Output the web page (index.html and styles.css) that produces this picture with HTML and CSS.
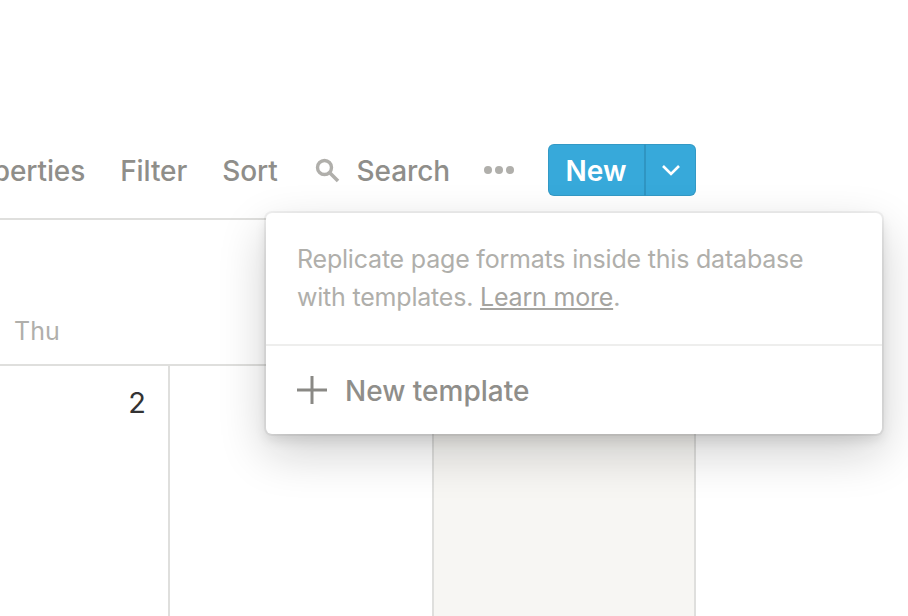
FILE: index.html
```html
<!DOCTYPE html>
<html lang="en">
<head>
<meta charset="utf-8">
<title>Templates</title>
<link rel="stylesheet" href="styles.css">
</head>
<body>
<div class="page">
  <div class="board">
    <div class="toolbar-wrap">
      <div class="toolbar">
        <span class="tool">Properties</span>
        <span class="tool">Filter</span>
        <span class="tool">Sort</span>
        <span class="tool search">
          <svg class="search-icon" width="26" height="26" viewBox="0 0 26 26"><circle cx="10.5" cy="10.5" r="7" fill="none" stroke="#b0afab" stroke-width="3.4"/><path d="M15.5 15.5L24 24" fill="none" stroke="#b0afab" stroke-width="3.6"/></svg>
          Search
        </span>
        <span class="dots"><i></i><i></i><i></i></span>
        <div class="new-btn">
          <span class="new-label">New</span>
          <span class="new-arrow">
            <svg width="20" height="12" viewBox="0 0 20 12"><path d="M2 2l8 8 8-8" fill="none" stroke="#fff" stroke-width="2.6"/></svg>
          </span>
        </div>
      </div>
    </div>
    <div class="head-row"><span class="day">Thu</span></div>
    <div class="cal-row">
      <div class="cell first"><span class="num">2</span></div>
      <div class="cell second"></div>
      <div class="cell shaded"></div>
    </div>
  </div>
  <div class="popup">
    <p class="hint">Replicate page formats inside this database with templates. <a class="learn">Learn more</a>.</p>
    <div class="add">
      <svg class="plus" width="30" height="28" viewBox="0 0 30 28"><path d="M0 14H30M15 0V28" fill="none" stroke="#8a8985" stroke-width="3"/></svg>
      <span class="add-label">New template</span>
    </div>
  </div>
</div>
</body>
</html>
```

FILE: styles.css
```css
html, body { margin: 0; padding: 0; background: #fff; }
.page {
  position: relative;
  width: 908px;
  height: 616px;
  overflow: hidden;
  font-family: Inter, "Liberation Sans", sans-serif;
  color: #37352f;
}
.board { width: 696px; }
.toolbar-wrap {
  padding-top: 144px;
  height: 74px;
  border-bottom: 2px solid #dfdfdd;
}
.toolbar {
  display: flex;
  justify-content: flex-end;
  align-items: center;
  height: 52px;
  gap: 35px;
}
.tool {
  font-size: 28px;
  font-weight: 500;
  letter-spacing: -.1px;
  padding-top: 2px;
  color: #8f8e8a;
  white-space: nowrap;
  flex: none;
}
.search { display: flex; align-items: center; gap: 17px; margin-left: 1px; }
.search-icon { flex: none; margin-top: -2px; }
.dots { display: flex; gap: 3px; flex: none; margin-left: -1px; }
.dots i { width: 8px; height: 8px; border-radius: 50%; background: #b0afab; display: block; }
.new-btn {
  display: flex;
  flex: none;
  width: 148px;
  height: 52px;
  margin-left: -1px;
  background: #37a9da;
  border-radius: 6px;
  box-shadow: inset 0 0 0 1px rgba(15,15,15,.1);
  color: #fff;
}
.new-label {
  width: 96px;
  padding-top: 2px;
  display: flex;
  align-items: center;
  justify-content: center;
  font-size: 28px;
  font-weight: 600;
  border-right: 2px solid #2f95c2;
}
.new-arrow { flex: 1; display: flex; align-items: center; justify-content: center; }
.head-row {
  height: 144px;
  border-bottom: 2px solid #dfdfdd;
  position: relative;
}
.day {
  position: absolute;
  left: 14px;
  top: 96px;
  font-size: 25px;
  color: #b0afab;
}
.cal-row {
  display: grid;
  grid-template-columns: 170px 264px 262px;
  height: 250px;
}
.cell { border-right: 2px solid #dfdfdd; }
.first { text-align: right; padding: 19px 22px 0 0; }
.num { font-size: 29px; color: #333; }
.shaded { background: #f7f6f3; }
.popup {
  position: absolute;
  left: 266px;
  top: 213px;
  width: 616px;
  height: 221px;
  background: #fff;
  border-radius: 6px;
  box-shadow: 0 0 0 2px rgba(15,15,15,.05), 0 6px 12px rgba(15,15,15,.1), 0 18px 48px rgba(15,15,15,.2);
}
.hint {
  margin: 0;
  height: 133px;
  box-sizing: border-box;
  padding: 27px 60px 0 31px;
  font-size: 25px;
  font-weight: 400;
  letter-spacing: -.2px;
  line-height: 38px;
  color: #b0afab;
  border-bottom: 2px solid #eeeeed;
}
.learn { text-decoration: underline; color: #a5a4a0; }
.add {
  display: flex;
  align-items: center;
  gap: 18px;
  padding: 0 0 0 31px;
  height: 88px;
  font-size: 28px;
  font-weight: 500;
  color: #8f8e8a;
}
.plus { flex: none; margin-top: -1px; }
.add-label { padding-top: 2px; }
```
